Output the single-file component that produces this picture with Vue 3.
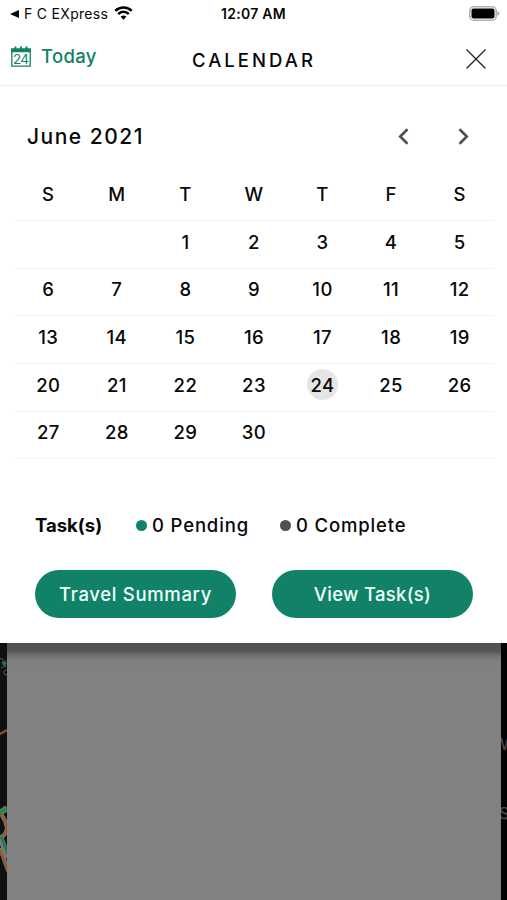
<script setup>
const weekdays = ['S', 'M', 'T', 'W', 'T', 'F', 'S']
const today = 24
const weeks = Array.from({ length: 5 }, (_, w) =>
  Array.from({ length: 7 }, (_, d) => {
    const day = w * 7 + d - 1
    return day >= 1 && day <= 30 ? day : null
  })
)
</script>

<template>
  <div class="screen">
    <main class="sheet">
      <div class="status">
        <div class="back">
          <svg class="back-arrow" viewBox="0 0 9 8"><path d="M0 4 9 0v8z" /></svg>
          <span class="back-label">F C EXpress</span>
          <svg class="wifi" viewBox="0 0 19 14">
            <path d="M1.3 4.9a11.7 11.7 0 0 1 16.4 0M4.2 8a7.6 7.6 0 0 1 10.6 0" fill="none" stroke="#000" stroke-width="2.5" />
            <path d="M9.5 13.8 6.6 10.8a4.2 4.2 0 0 1 5.8 0z" />
          </svg>
        </div>
        <span class="clock">12:07 AM</span>
        <svg class="battery" viewBox="0 0 31 15">
          <rect x=".8" y=".8" width="26.4" height="13.4" rx="4" fill="#fff" stroke="#b2b2b2" stroke-width="1.6" />
          <rect x="2.5" y="2.6" width="23" height="9.8" rx="1.8" />
          <path d="M28.4 5v5q2-.8 2-2.5T28.4 5z" fill="#aaa" />
        </svg>
      </div>

      <header class="header">
        <button class="today">
          <svg class="today-icon" viewBox="0 0 20 22">
            <path d="M.8 5v15.2h18.4V5" fill="none" stroke="#118267" stroke-width="1.3" />
            <path d="M0 2.2h3.5V.5h2v1.7h3.4V.5h2v1.7h3.6V.5h2v1.7H20v4H0z" fill="#118267" />
            <text x="10" y="18.4" text-anchor="middle" textLength="16">24</text>
          </svg>
          <span>Today</span>
        </button>
        <h1 class="title">CALENDAR</h1>
        <button class="close" aria-label="Close">
          <svg viewBox="0 0 20 20"><path d="m.5.5 19 19m0-19-19 19" fill="none" stroke="#222" stroke-width="1.3" /></svg>
        </button>
      </header>

      <section class="month">
        <h2 class="month-name">June 2021</h2>
        <div class="arrows">
          <svg viewBox="0 0 11 17"><path d="M9.5 1.3 2.2 8.5l7.3 7.2" /></svg>
          <svg viewBox="0 0 11 17"><path d="m1.5 1.3 7.3 7.2-7.3 7.2" /></svg>
        </div>
      </section>

      <section class="calendar">
        <div class="row">
          <span v-for="(name, i) in weekdays" :key="i" class="cell">{{ name }}</span>
        </div>
        <div v-for="(week, w) in weeks" :key="w" class="row">
          <span v-for="(day, d) in week" :key="d" class="cell">
            <span class="day" :class="{ current: day === today }">{{ day }}</span>
          </span>
        </div>
      </section>

      <section class="tasks">
        <strong class="tasks-label">Task(s)</strong>
        <span class="count pending"><i class="dot green"></i>0 Pending</span>
        <span class="count complete"><i class="dot grey"></i>0 Complete</span>
      </section>

      <section class="actions">
        <button class="action travel">Travel Summary</button>
        <button class="action view">View Task(s)</button>
      </section>
    </main>

    <div class="backdrop">
      <svg class="map-left" viewBox="0 0 7 257">
        <g fill="none">
          <path d="M0 16q3-2 3 2t4 2M1 25l5-2M7 27q-4 0-3 4l3 1" stroke="#555a5a" />
          <path d="M2 19l4 4M6 18l-3 4" stroke="#28785e" stroke-width="1.5" />
          <path d="M0 91 7 87" stroke="#895128" stroke-width="2.5" />
          <path d="M0 170 7 165" stroke="#67766a" stroke-width="6" />
          <path d="M0 170 7 165" stroke="#258b43" stroke-width="3.5" />
          <path d="M1 171q5 7 6 14Q5 194 0 194" stroke="#737b78" stroke-width="4" />
          <path d="M1 171q5 7 6 14Q5 194 0 194" stroke="#95592e" stroke-width="2.4" />
          <path d="M0 193 8 215" stroke="#737b78" stroke-width="6" />
          <path d="M1 193 8 211" stroke="#2c7850" stroke-width="3" />
          <path d="M0 205 8 227" stroke="#747a76" stroke-width="4" />
          <path d="M0 207 8 229" stroke="#95592e" stroke-width="2.8" />
        </g>
      </svg>
      <div class="panel"></div>
      <svg class="map-right" viewBox="0 0 6 257">
        <text x="-1" y="107">W</text>
        <text x="-2" y="176">S</text>
      </svg>
    </div>
  </div>
</template>

<style>
body {
  margin: 0;
}
</style>

<style scoped>
.screen {
  width: 507px;
  height: 900px;
  overflow: hidden;
  display: flex;
  flex-direction: column;
  color: #080808;
  font-family: Inter, "Liberation Sans", sans-serif;
}
.sheet {
  height: 643px;
  box-sizing: border-box;
  flex: none;
  background: #fff;
}
.status {
  height: 28px;
  padding: 0 7px 0 10px;
  display: grid;
  grid-template-columns: 1fr auto 1fr;
  align-items: center;
}
.back {
  display: flex;
  align-items: center;
}
.back-arrow {
  width: 9px;
  height: 8px;
}
.back-label {
  margin-left: 5px;
  width: 85px;
  padding-bottom: 2px;
  font-size: 14px;
  letter-spacing: .3px;
  white-space: nowrap;
}
.wifi {
  width: 19px;
  height: 14px;
  margin-left: 5px;
  margin-bottom: 2px;
}
.clock {
  margin-left: -3px;
  padding-bottom: 2px;
  font-size: 14px;
  font-weight: 600;
  letter-spacing: .3px;
}
.battery {
  width: 31px;
  height: 15px;
  justify-self: end;
  margin-bottom: 2px;
}
button {
  border: 0;
  padding: 0;
  background: none;
  font: inherit;
  color: inherit;
}
.header {
  height: 57px;
  border-bottom: 1px solid #eee;
  padding: 0 21px 0 11px;
  display: grid;
  grid-template-columns: 1fr auto 1fr;
  align-items: center;
}
.today {
  display: flex;
  align-items: center;
  gap: 10px;
  color: #118267;
  font-size: 18.5px;
  font-weight: 500;
  letter-spacing: .3px;
}
.today span {
  padding-bottom: 2px;
}
.today-icon {
  width: 20px;
  height: 22px;
}
.today-icon text {
  font-size: 13.5px;
  font-weight: 400;
  letter-spacing: 0;
  fill: #118267;
}
.title {
  margin: 7px -11px 0 0;
  font-size: 18.5px;
  font-weight: 500;
  letter-spacing: 3.05px;
}
.close {
  justify-self: end;
  width: 20px;
  height: 20px;
  margin-top: 5px;
}
.close svg {
  display: block;
  width: 20px;
  height: 20px;
}
.month {
  height: 86px;
  box-sizing: border-box;
  padding: 16px 38px 0 27px;
  display: flex;
  justify-content: space-between;
}
.month-name {
  margin: 20px 0 0;
  font-size: 21px;
  line-height: 30px;
  font-weight: 500;
  letter-spacing: 1.5px;
}
.arrows {
  display: flex;
  gap: 49px;
  margin-top: 26px;
}
.arrows svg {
  width: 11px;
  height: 17px;
}
.arrows path {
  fill: none;
  stroke: #505050;
  stroke-width: 2.6;
}
.calendar {
  margin: 1.3px 13px 0 14px;
}
.row {
  height: 47.7px;
  box-sizing: border-box;
  border-bottom: 1px solid #f3f3f3;
  display: grid;
  grid-template-columns: repeat(7, 1fr);
}
.cell {
  height: 41.4px;
  display: flex;
  align-items: center;
  justify-content: center;
  font-size: 18.5px;
  font-weight: 500;
  letter-spacing: .4px;
}
.day {
  width: 31px;
  height: 31px;
  display: flex;
  align-items: center;
  justify-content: center;
  border-radius: 50%;
}
.current {
  background: #e5e5e5;
}
.tasks {
  height: 30px;
  margin-top: 50.7px;
  padding-left: 35px;
  display: flex;
  align-items: center;
  font-size: 18.5px;
}
.tasks-label {
  width: 101px;
  font-weight: 700;
}
.count {
  display: flex;
  align-items: center;
  gap: 5px;
  font-weight: 500;
  letter-spacing: .85px;
}
.pending {
  width: 144px;
}
.dot {
  width: 11px;
  height: 11px;
  border-radius: 50%;
}
.green {
  background: #118267;
}
.grey {
  background: #505050;
}
.actions {
  display: flex;
  justify-content: space-between;
  margin: 30px 34px 0 35px;
}
.action {
  width: 201px;
  height: 48px;
  border-radius: 25px;
  background: #118267;
  color: #effffb;
  font-size: 18.5px;
  font-weight: 500;
}
.travel {
  letter-spacing: .68px;
}
.view {
  letter-spacing: .3px;
}
.backdrop {
  flex: 1;
  display: grid;
  grid-template-columns: 7px 1fr 6px;
  background: #101011;
}
.map-left {
  width: 7px;
  height: 257px;
}
.map-right {
  width: 6px;
  height: 257px;
  background: #030303;
}
.map-right text {
  font-size: 16px;
  fill: #4c5150;
}
.panel {
  background: linear-gradient(#515151 0, #555 8px, #707070 12px, #7e7e7e 17px, #818181 22px);
}
</style>
